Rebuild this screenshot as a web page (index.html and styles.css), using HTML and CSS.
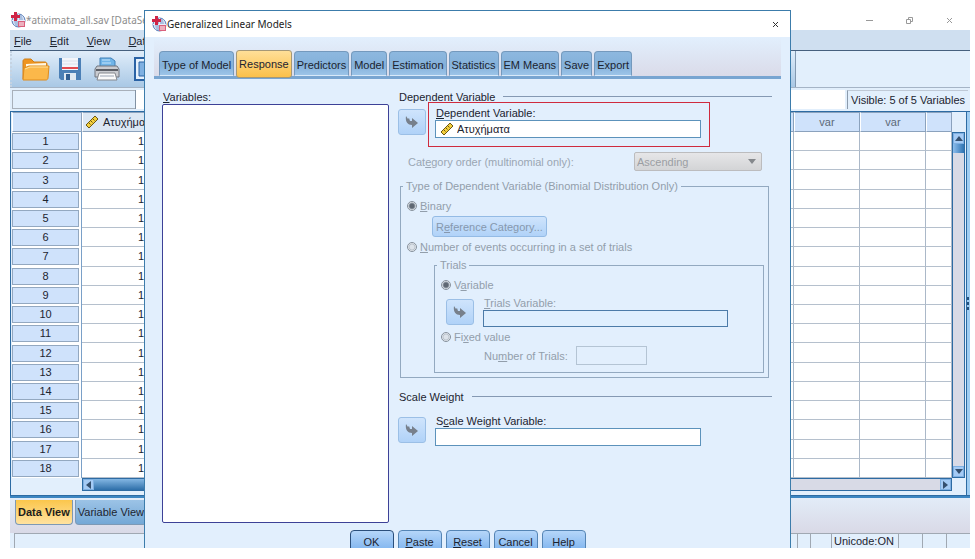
FILE: index.html
```html
<!DOCTYPE html>
<html lang="en">
<head>
    <meta charset="UTF-8">
    <meta name="viewport" content="width=device-width, initial-scale=1.0">
    <title>Generalized Linear Models</title>
    <link rel="stylesheet" href="styles.css">
</head>
<body>

<!-- shared icons -->
<svg class="sprite" aria-hidden="true">
    <symbol id="logo" viewBox="0 0 16 16">
        <circle cx="8.5" cy="8.5" r="6.5" fill="#a9bfe0" stroke="#5f82bb"/>
        <path d="M8.5 2v13M2 8.5h13M5 3.5c-2 3-2 7 0 10M12 3.5c2 3 2 7 0 10" fill="none" stroke="#e6eefa"/>
        <path d="M4 0h3v3h3v3H7v3H4V6H1V3h3z" fill="#cf2546"/>
        <path d="M8 9h7v6H8z" fill="#d9607c"/>
        <path d="M9 11h5M9 13h5" stroke="#fff"/>
    </symbol>
    <symbol id="ruler" viewBox="0 0 14 14">
        <path d="M1 10L10 1l3 3-9 9z" fill="#f3cf3c" stroke="#6b5713"/>
        <path d="M4 8l1.500 1.500M6 6l1.500 1.500M8 4l1.500 1.500" stroke="#6b5713"/>
    </symbol>
    <symbol id="arrow" viewBox="0 0 14 12">
        <path d="M1 0l2 3 1-1 1 3h2V2l6 5-6 5V9C3 9 0 6 1 0z" fill="currentColor"/>
    </symbol>
</svg>

<div class="app">
    <div class="app-title">
        <svg class="logo"><use href="#logo"/></svg>
        <span>*atiximata_all.sav [DataSet1]</span>
        <div class="win-btns">
            <button aria-label="Minimize"><svg viewBox="0 0 7 7"><path d="M0 3.500h7"/></svg></button>
            <button aria-label="Restore"><svg viewBox="0 0 7 7"><path d="M.5 2.500h4v4h-4zM2.500 2V.5h4v4H5"/></svg></button>
            <button aria-label="Close"><svg viewBox="0 0 7 7"><path d="M1 1l5 5M6 1L1 6"/></svg></button>
        </div>
    </div>
    <div class="menu">
        <a href="#"><u>F</u>ile</a>
        <a href="#"><u>E</u>dit</a>
        <a href="#"><u>V</u>iew</a>
        <a href="#"><u>D</u>ata</a>
    </div>
    <div class="toolbar">
        <div class="tools">
            <button aria-label="Open">
                <svg viewBox="0 0 28 24">
                    <path d="M1 22V4c0-1 1-2 2-2h6l3 3h11c1 0 2 1 2 2v3z" fill="#ee9420" stroke="#cf7e18"/>
                    <path d="M4 7l20-1v10H4z" fill="#fff6e0"/>
                    <path d="M1 23L2 11l5-2h20l-1 12c0 1-1 2-2 2z" fill="#fbb84a" stroke="#df8c1d"/>
                    <path d="M3 12l5-2h18" stroke="#ffe09b" fill="none"/>
                </svg>
            </button>
            <button aria-label="Save">
                <svg viewBox="0 0 24 24">
                    <path d="M1 1h22v22H3l-2-2z" fill="#4b7fb6"/>
                    <path d="M4 1h16v12H4z" fill="#f3f5fa"/>
                    <path d="M4 10h16v2H4z" fill="#e24b50"/>
                    <path d="M4 4h16M4 7h16" stroke="#dbe2ec"/>
                    <path d="M6 16h12v7H6z" fill="#dfe8f2"/>
                    <path d="M8 17h4v6H8z" fill="#315e92"/>
                </svg>
            </button>
            <button aria-label="Print">
                <svg viewBox="0 0 26 24">
                    <path d="M6 10V1h11l4 3v6z" fill="#6fb4e8" stroke="#4381b7"/>
                    <path d="M8 3h8M8 6h9" stroke="#c6e4fa"/>
                    <path d="M3 9h20l2 3v8H1v-8z" fill="#c9cbd0" stroke="#70757e"/>
                    <path d="M2 13h22" stroke="#5d6067" stroke-width="2"/>
                    <path d="M5 16h16l2 7H3z" fill="#fafafa" stroke="#85888e"/>
                    <path d="M6 19h14" stroke="#9aa4b4"/>
                </svg>
            </button>
            <button aria-label="Recall dialog" class="recall">
                <svg viewBox="0 0 24 24">
                    <path d="M1 1h22v22H1z" fill="#e6f1fc" stroke="#2a62a5" stroke-width="2"/>
                    <path d="M5 5h14v14H5z" fill="#7fb0e2" stroke="#2a62a5"/>
                </svg>
            </button>
        </div>
    </div>
    <div class="cell-bar">
        <div class="cell-name"></div>
        <input class="cell-value" aria-label="Cell value" type="text">
        <div class="visible">Visible: 5 of 5 Variables</div>
    </div>

    <div class="sheet">
        <div class="grid-area">
            <table class="data">
                <colgroup><col class="c-num"><col class="c-wide"><col class="c-var" span="11"><col></colgroup>
                <thead>
                    <tr class="head"><th></th><th><div class="named"><svg class="ruler"><use href="#ruler"/></svg>Ατυχήματα</div></th></tr>
                </thead>
                <tbody></tbody>
            </table>
            <div class="vscroll">
                <button aria-label="Scroll up"><svg viewBox="0 0 8 5"><path d="M4 0l4 5H0z"/></svg></button>
                <div class="thumb"></div>
                <button aria-label="Scroll down"><svg viewBox="0 0 8 5"><path d="M0 0h8L4 5z"/></svg></button>
            </div>
        </div>
        <div class="hscroll">
            <button aria-label="Scroll left"><svg viewBox="0 0 5 8"><path d="M5 0v8L0 4z"/></svg></button>
            <div class="thumb"></div>
            <button aria-label="Scroll right"><svg viewBox="0 0 5 8"><path d="M0 0l5 4-5 4z"/></svg></button>
        </div>
        <div class="splitter"><i></i><i></i><i></i></div>
    </div>

    <div class="views">
        <button class="view active">Data View</button>
        <button class="view">Variable View</button>
    </div>
    <div class="status">
        <div class="msg"></div><div class="s1"></div><div class="s2"></div>
        <div class="uni">Unicode:ON</div>
        <div class="s3"></div><div class="s3"></div><div class="s3"></div>
    </div>

    <div class="dialog" role="dialog" aria-labelledby="dlg-title">
        <div class="dlg-title">
            <svg class="logo"><use href="#logo"/></svg>
            <span id="dlg-title">Generalized Linear Models</span>
            <button class="close" aria-label="Close"><svg viewBox="0 0 7 7"><path d="M1 1l5 5M6 1L1 6"/></svg></button>
        </div>
        <div class="tabs">
            <button class="tab">Type of Model</button>
            <button class="tab active">Response</button>
            <button class="tab">Predictors</button>
            <button class="tab">Model</button>
            <button class="tab">Estimation</button>
            <button class="tab">Statistics</button>
            <button class="tab">EM Means</button>
            <button class="tab">Save</button>
            <button class="tab">Export</button>
        </div>

        <div class="panel">
            <div class="left">
                <label for="vars"><u>V</u>ariables:</label>
                <select id="vars" class="var-list" size="20"></select>
            </div>
            <div class="right">
                <h2>Dependent Variable</h2>
                <div class="pick marked">
                    <button class="move" aria-label="Move to dependent variable" disabled><svg><use href="#arrow"/></svg></button>
                    <div class="field">
                        <label for="dep"><u>D</u>ependent Variable:</label>
                        <div class="box"><svg class="ruler"><use href="#ruler"/></svg><input id="dep" type="text" value="Ατυχήματα"></div>
                    </div>
                </div>
                <div class="order">
                    <label for="order">Cat<u>e</u>gory order (multinomial only):</label>
                    <div class="combo">
                        <select id="order" disabled><option>Ascending</option></select>
                        <svg viewBox="0 0 8 5"><path d="M0 0h8L4 5z"/></svg>
                    </div>
                </div>

                <fieldset class="binomial" disabled>
                    <legend>Type of Dependent Variable (Binomial Distribution Only)</legend>
                    <label class="radio"><input type="radio" name="type" checked><span><u>B</u>inary</span></label>
                    <button class="ref">R<u>e</u>ference Category...</button>
                    <label class="radio"><input type="radio" name="type"><span><u>N</u>umber of events occurring in a set of trials</span></label>
                    <fieldset class="trials">
                        <legend>Trials</legend>
                        <label class="radio"><input type="radio" name="trials" checked><span>V<u>a</u>riable</span></label>
                        <div class="pick">
                            <button class="move" aria-label="Move to trials variable"><svg><use href="#arrow"/></svg></button>
                            <div class="field">
                                <label for="tvar"><u>T</u>rials Variable:</label>
                                <input id="tvar" class="box" type="text">
                            </div>
                        </div>
                        <label class="radio"><input type="radio" name="trials"><span>Fi<u>x</u>ed value</span></label>
                        <div class="count">
                            <label for="ntrials">Nu<u>m</u>ber of Trials:</label>
                            <input id="ntrials" type="text">
                        </div>
                    </fieldset>
                </fieldset>

                <h2 class="weight">Scale Weight</h2>
                <div class="pick">
                    <button class="move" aria-label="Move to scale weight variable" disabled><svg><use href="#arrow"/></svg></button>
                    <div class="field">
                        <label for="scale">S<u>c</u>ale Weight Variable:</label>
                        <input id="scale" class="box" type="text">
                    </div>
                </div>
            </div>
        </div>

        <div class="actions">
            <button class="default">OK</button>
            <button><u>P</u>aste</button>
            <button><u>R</u>eset</button>
            <button>Cancel</button>
            <button>Help</button>
        </div>
    </div>
</div>

<script>
    const head = document.querySelector('.head')
    const body = document.querySelector('.data tbody')

    // empty columns after the named variable, the last one is only partly in view
    for(let c=0; c<12; c++){
        let th=document.createElement('th')
        if(c===9 || c===10) th.textContent='var'
        head.append(th)
    }

    for(let r=1; r<=18; r++){
        let row=body.insertRow()
        let num=document.createElement('th')
        num.innerHTML='<div>'+r+'</div>'
        row.append(num)
        for(let c=0; c<13; c++){
            row.insertCell().textContent = c===0 ? '1' : ''
        }
    }
</script>
</body>
</html>
```
FILE: styles.css
```css
*{
    box-sizing: border-box;
}
body{
    margin: 0;
    padding: 10px 5px 11px 10px;
    background-color: #fff;
    font-family: "Liberation Sans", Arial, sans-serif;
    font-size: 11px;
    line-height: 14px;
    color: #1c2430;
}
button, input, select{
    font: inherit;
    color: inherit;
    margin: 0;
    padding: 0;
    border: none;
    background: none;
    outline: none;
}
u{
    text-underline-offset: 1px;
}
.sprite{
    position: absolute;
    width: 0;
    height: 0;
}
.logo{
    flex: none;
    width: 16px;
    height: 16px;
}
.ruler{
    flex: none;
    width: 14px;
    height: 14px;
}

.app{
    position: relative;
    overflow: hidden;
}

/* ---------- main window ---------- */
.app-title, .dlg-title{
    display: flex;
    align-items: center;
    font-family: "Noto Sans", sans-serif;
    font-size: 10px;
    background-color: #fff;
}
.app-title{
    height: 20px;
    color: #8c8c8c;
}
.app-title span{
    white-space: nowrap;
}
.win-btns{
    display: flex;
    gap: 33px;
    margin-left: auto;
    padding-right: 17px;
}
.win-btns button, .close{
    display: flex;
    width: 7px;
    height: 7px;
}
.win-btns path, .close path{
    fill: none;
    stroke: #999;
}
.menu{
    display: flex;
    gap: 18px;
    height: 21px;
    padding: 4px;
    background-color: #cfdff0;
    border-bottom: 1px solid #46607e;
}
.menu a{
    color: inherit;
    text-decoration: none;
}
.toolbar{
    height: 37px;
    background-color: #e2effc;
    border-bottom: 1px solid #a5b4c6;
}
.tools{
    display: flex;
    align-items: center;
    gap: 10px;
    width: 786px;
    height: 36px;
    padding-left: 10px;
    background: linear-gradient(#e0edfa, #a9c8e5);
    border-left: 2px dotted #c5d3e2;
    border-right: 1px solid #8298b0;
}
.tools button, .tools svg{
    display: block;
    height: 24px;
}
.tools button{
    width: 26px;
}
.tools button:first-child svg{
    width: 28px;
}
.tools .recall{
    padding-left: 4px;
}
.cell-bar{
    display: flex;
    height: 23px;
    padding: 2px;
    background-color: #e2effc;
}
.cell-name{
    width: 123px;
    border: 1px solid #a8b0ba;
    border-right: none;
}
.cell-value{
    flex: 1;
    min-width: 0;
    background-color: #fff;
    border-left: 1px solid #8292a4;
}
.visible{
    margin-left: 2px;
    padding: 2px 3px;
    white-space: nowrap;
    border-left: 1px solid #8c9bac;
    border-top: 1px solid #bfc9d6;
}

/* ---------- grid ---------- */
.sheet{
    position: relative;
    height: 385px;
    padding-right: 18px;
    background-color: #e2effc;
    border: 1px solid #2d6ba3;
    border-right: none;
}
.grid-area{
    position: relative;
    padding-left: 1px;
}
.data{
    width: 100%;
    height: 366px;
    table-layout: fixed;
    border-spacing: 0;
    background-color: #fff;
}
.data th, .data td{
    padding: 0;
    font-weight: normal;
    white-space: nowrap;
}
.c-num{
    width: 70px;
}
.c-var{
    width: 66px;
}
.c-wide{
    width: 118px;
}
.data .head th{
    height: 20px;
    background: #cfe2fb;
    border: 1px solid #8ba2bd;
    border-left-color: #fff;
    color: #5c6978;
}
.named{
    display: flex;
    align-items: center;
    gap: 4px;
    height: 18px;
    padding-left: 2px;
    color: #1c2430;
    background: #dbe7f4;
}
.data tbody th{
    padding: 1px 2px 1px 0;
    border-right: 1px solid #7aa0c8;
}
.data tbody th div{
    height: 17px;
    line-height: 15px;
    background-color: #cfe2fb;
    border: 1px solid #93a8c0;
}
.data td{
    padding-right: 55px;
    text-align: right;
    border-right: 1px solid #abb8c8;
    border-bottom: 1px solid #b5c0cd;
}
.vscroll, .hscroll{
    display: flex;
    background: #d8dae6;
    border: 1px solid #2d6ba3;
}
.vscroll{
    position: absolute;
    top: 20px;
    right: -13px;
    bottom: 0;
    width: 13px;
    flex-direction: column;
    justify-content: space-between;
}
.vscroll button, .hscroll button{
    display: flex;
    align-items: center;
    justify-content: center;
    width: 11px;
    height: 11px;
    background-color: #a5cbf5;
    border: 1px solid #7fb0e2;
}
.vscroll svg{
    width: 8px;
    height: 5px;
    fill: #35506f;
}
.vscroll .thumb{
    height: 9px;
    margin-bottom: auto;
    background: linear-gradient(to right, #8dbdec, #2f74b3);
}
.hscroll{
    height: 13px;
    margin-left: 71px;
    justify-content: space-between;
}
.hscroll svg{
    width: 5px;
    height: 8px;
    fill: #35506f;
}
.hscroll .thumb{
    width: 520px;
    margin-right: auto;
    background: linear-gradient(#83b6e3, #2e6fa9);
}
.splitter{
    position: absolute;
    top: 0;
    right: 0;
    bottom: 0;
    display: flex;
    flex-direction: column;
    justify-content: center;
    align-items: center;
    gap: 2px;
    width: 4px;
    background: linear-gradient(to right, #2d6ba3 1px, #9fcdf2 1px);
}
.splitter i{
    width: 2px;
    height: 3px;
    background-color: #24527f;
}

.views{
    display: flex;
    gap: 2px;
    height: 37px;
    padding: 2px 5px 8px;
    background: linear-gradient(#e2ecf8, #d9d9e6);
    border-top: 2px solid #3c86c2;
}
.view{
    padding: 0 2px;
    white-space: nowrap;
    background: linear-gradient(#9cc3e6, #74a8d6);
    border: 1px solid #7d99b5;
    border-top: none;
    border-radius: 0 0 4px 4px;
}
.view.active{
    font-weight: bold;
    color: #1c1c1c;
    background: linear-gradient(#fbc64c, #ffe2a0);
}
.status{
    display: flex;
    height: 15px;
    padding-left: 4px;
    line-height: 15px;
    background-color: #e2effc;
}
.status div{
    border-top: 1px solid #a0a8b2;
    border-left: 1px solid #a0a8b2;
}
.msg{
    flex: 1;
}
.s1{
    width: 13px;
}
.s2{
    width: 21px;
}
.uni{
    width: 67px;
    padding-left: 2px;
}
.s3{
    width: 24px;
}

/* ---------- dialog ---------- */
.dialog{
    position: absolute;
    top: 0;
    bottom: 0;
    left: 134px;
    width: 647px;
    overflow: hidden;
    background-color: #e2effd;
    border: 1px solid #3c7cab;
    border-bottom: none;
}
.dlg-title{
    height: 26px;
    padding-left: 6px;
    color: #222;
}
.close{
    margin-left: auto;
    margin-right: 11px;
}
.close path{
    stroke: #333;
}
.tabs{
    display: flex;
    align-items: flex-end;
    gap: 2px;
    height: 42px;
    margin: 0 9px;
    padding-left: 5px;
    background: linear-gradient(#e2effd, #dadbe9);
    border-bottom: 3px solid #78a5d1;
}
.tab{
    height: 25px;
    padding: 3px 2px 0;
    white-space: nowrap;
    background: linear-gradient(#8db8df, #84b1da 60%, #9cc4e8);
    border: 1px solid #7499bd;
    border-bottom-color: #d8e9f9;
    border-radius: 4px 4px 0 0;
}
.tab.active{
    position: relative;
    height: 28px;
    margin-bottom: -2px;
    padding: 0 2px;
    background: linear-gradient(#ffdf98, #fbc04a);
    border: 1px solid #a59877;
    border-radius: 3px;
}
.panel{
    display: flex;
    gap: 9px;
    padding: 11px 18px 0 17px;
}
.left{
    display: flex;
    flex-direction: column;
    width: 227px;
}
.left label{
    padding-left: 1px;
}
.var-list{
    height: 419px;
    background-color: #fff;
    border: 1px solid #3d4197;
}
.right{
    flex: 1;
}
h2{
    display: flex;
    gap: 8px;
    margin: 0 0 2px;
    padding-left: 1px;
    font-size: 11px;
    font-weight: normal;
}
h2::after{
    content: "";
    flex: 1;
    height: 6px;
    border-bottom: 1px solid #8599b3;
}
.weight{
    margin: 12px 0 10px;
}
.pick{
    position: relative;
    display: flex;
    gap: 9px;
}
/* highlight round the chosen variable */
.marked::after{
    content: "";
    position: absolute;
    top: -4px;
    left: 30px;
    width: 280px;
    height: 43px;
    border: 1px solid #cf2b3e;
    pointer-events: none;
}
.move{
    display: flex;
    align-items: center;
    justify-content: center;
    width: 28px;
    height: 26px;
    margin-top: 3px;
    color: #77808c;
    background: linear-gradient(#cfe4fc, #b0d2f8);
    border: 1px solid #9bbfe6;
    border-radius: 3px;
}
.move svg{
    width: 14px;
    height: 12px;
}
.field{
    display: flex;
    flex-direction: column;
    width: 266px;
}
.field label{
    padding-left: 1px;
}
.box{
    display: flex;
    align-items: center;
    gap: 3px;
    height: 18px;
    padding: 0 4px;
    background-color: #fff;
    border: 1px solid #5c92bb;
}
.box input{
    flex: 1;
}
.order{
    display: flex;
    align-items: center;
    justify-content: space-between;
    margin-top: 14px;
    padding: 0 10px;
    color: #9aa6b3;
}
.combo{
    position: relative;
    width: 128px;
}
.combo select{
    appearance: none;
    display: block;
    width: 100%;
    height: 19px;
    padding-left: 2px;
    color: #9b9ea3;
    opacity: 1;
    background: linear-gradient(#e6e6e8, #d3d4d6);
    border: 1px solid #bcbcbe;
    border-radius: 2px;
}
.combo svg{
    position: absolute;
    top: 7px;
    right: 6px;
    width: 8px;
    height: 5px;
    fill: #85888c;
}
fieldset{
    display: flex;
    flex-direction: column;
    min-width: 0;
    padding: 6px 4px 4px 6px;
    border: 1px solid #93a9c0;
    color: #929eab;
}
legend{
    margin-left: -4px;
    padding: 0 3px;
}
.binomial{
    margin: 8px 3px 0 2px;
}
.trials{
    margin: 4px 0 0 27px;
    padding-bottom: 7px;
}
.radio{
    display: flex;
    align-items: center;
    gap: 3px;
}
.radio input{
    appearance: none;
    width: 10px;
    height: 10px;
    border: 1px solid #87919c;
    border-radius: 50%;
    background: radial-gradient(#dde3ea 2px, #b9c1ca 3px, #f0f4f8 4px);
}
.radio input:checked{
    background: radial-gradient(#5f6873 2px, #96a0ab 3px, #f0f4f8 4px);
}
.ref{
    align-self: flex-start;
    height: 21px;
    margin: 3px 0 3px 25px;
    padding: 0 3px;
    color: #8698ae;
    background: linear-gradient(#cfe4fc, #b0d2f8);
    border: 1px solid #94bbe5;
    border-radius: 3px;
}
.trials .pick{
    margin: 4px 0 3px;
    padding-left: 5px;
}
.trials .field{
    width: 245px;
}
.trials .box{
    height: 17px;
    background-color: #dfeffe;
    border-color: #4c7ba8;
}
.count{
    display: flex;
    align-items: center;
    gap: 8px;
    margin-top: 2px;
    padding-left: 43px;
}
.count input{
    width: 71px;
    height: 19px;
    border: 1px solid #b4c4d4;
}
.actions{
    display: flex;
    justify-content: center;
    gap: 4px;
    margin-top: 7px;
}
.actions button{
    width: 44px;
    height: 23px;
    background: linear-gradient(#b5d6f9, #7cb2ee);
    border: 1px solid #5585b5;
    border-radius: 4px;
}
.actions .default{
    border-color: #2b4f7b;
}
```
